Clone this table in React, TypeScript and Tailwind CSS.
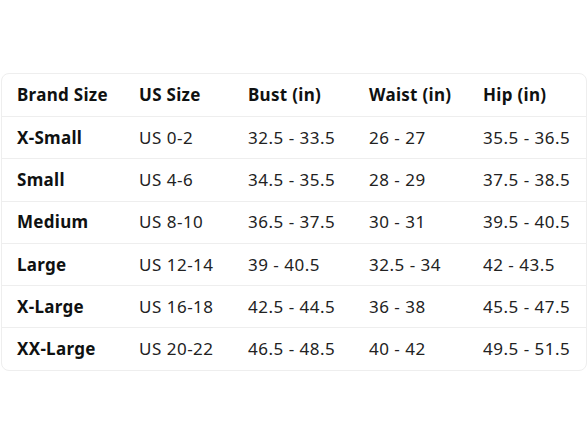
const headers = ["Brand Size", "US Size", "Bust (in)", "Waist (in)", "Hip (in)"];

const rows = [
  ["X-Small", "US 0-2", "32.5 - 33.5", "26 - 27", "35.5 - 36.5"],
  ["Small", "US 4-6", "34.5 - 35.5", "28 - 29", "37.5 - 38.5"],
  ["Medium", "US 8-10", "36.5 - 37.5", "30 - 31", "39.5 - 40.5"],
  ["Large", "US 12-14", "39 - 40.5", "32.5 - 34", "42 - 43.5"],
  ["X-Large", "US 16-18", "42.5 - 44.5", "36 - 38", "45.5 - 47.5"],
  ["XX-Large", "US 20-22", "46.5 - 48.5", "40 - 42", "49.5 - 51.5"],
];

const widths = ["w-[122px]", "w-[109px]", "w-[121px]", "w-[114px]", "flex-1"];

export default function App() {
  return (
    <div
      className="w-[588px] h-[441px] bg-white pt-[73px] px-px text-[17px] text-[#0f1111]"
      style={{ fontFamily: '"Noto Sans", "Open Sans", sans-serif' }}
    >
      <div className="rounded-lg border border-[#eeeeee] overflow-hidden">
        <div className="flex items-center h-[42px] pl-[15px] pb-px font-bold tracking-[0.3px]">
          {headers.map((h, i) => (
            <div key={h} className={widths[i]}>
              {h}
            </div>
          ))}
        </div>
        {rows.map((r) => (
          <div
            key={r[0]}
            className="flex items-center h-[42.3px] pl-[15px] border-t border-[#eeeeee]"
          >
            {r.map((c, i) => (
              <div
                key={i}
                className={`${widths[i]} ${i === 0 ? "font-bold tracking-[0.3px]" : "text-[#222] tracking-[0.5px]"}`}
              >
                {c}
              </div>
            ))}
          </div>
        ))}
      </div>
    </div>
  );
}
